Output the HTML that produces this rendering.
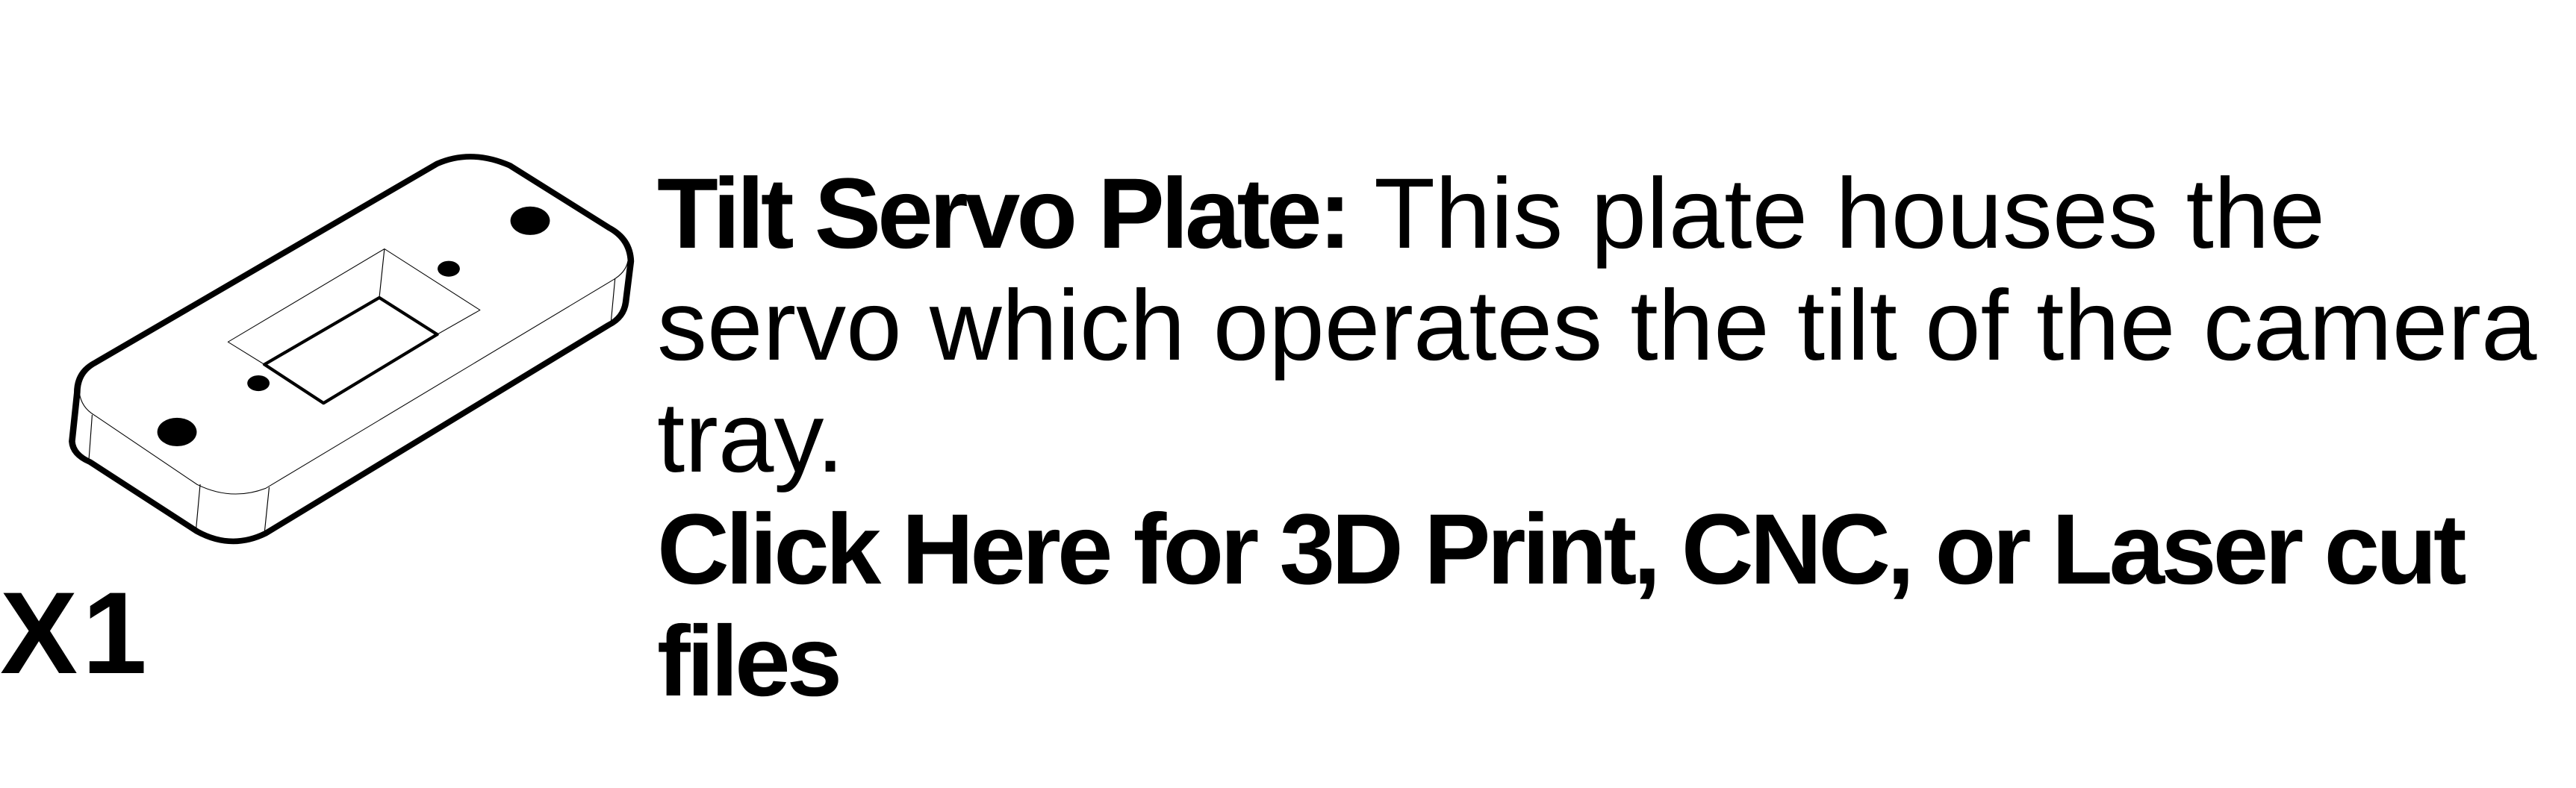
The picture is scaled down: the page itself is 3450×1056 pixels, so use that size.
<!DOCTYPE html>
<html><head><meta charset="utf-8"><style>
html,body{margin:0;padding:0;background:#fff;}
body{width:3450px;height:1056px;position:relative;overflow:hidden;font-family:"Liberation Sans",sans-serif;color:#000;}
.t{position:absolute;left:880px;top:212px;font-size:134px;line-height:150px;white-space:nowrap;}
.t div{height:150px;}
b{font-weight:700;letter-spacing:-5px;}
.x1{position:absolute;left:0px;top:771px;font-size:156px;font-weight:700;line-height:156px;letter-spacing:6px;}
svg{position:absolute;left:0;top:154px;}
</style></head><body>
<svg width="900" height="701" viewBox="0 0 1568 1394" preserveAspectRatio="none">
<g fill="none" stroke="#000" stroke-linejoin="round" stroke-linecap="round">
<path stroke-width="15" d="M210,925 L460,1110 Q540,1160 620,1115 L1420,560 Q1455,540 1460,500 L1472,390 Q1470,330 1420,300 L1190,135 Q1100,90 1020,130 L215,665 Q180,690 180,740 L168,870 Q170,905 210,925 Z"/>
<path stroke-width="2" d="M185,740 Q190,780 220,800 L460,985 Q540,1030 620,995 L1430,440 Q1460,420 1465,390"/>
<path stroke-width="2" d="M215,800 L207,925 M467,985 L457,1110 M628,993 L617,1115 M1435,437 L1425,560"/>
<path stroke-width="2" d="M617,665 L532,605 L897,357 L1120,520 L1020,585 M897,357 L885,487"/>
<path stroke-width="8" d="M617,665 L885,487 L1020,585 L755,768 Z"/>
</g>
<g fill="#000">
<ellipse cx="1237" cy="282" rx="46" ry="38"/>
<ellipse cx="1047" cy="410" rx="26" ry="21"/>
<ellipse cx="603" cy="715" rx="26" ry="21"/>
<ellipse cx="413" cy="845" rx="46" ry="38"/>
</g>
</svg>
<div class="x1">X1</div>
<div class="t">
<div><b>Tilt Servo Plate:</b> This plate houses the</div>
<div>servo which operates the tilt of the camera</div>
<div>tray.</div>
<div><b>Click Here for 3D Print, CNC, or Laser cut</b></div>
<div><b>files</b></div>
</div>
</body></html>
